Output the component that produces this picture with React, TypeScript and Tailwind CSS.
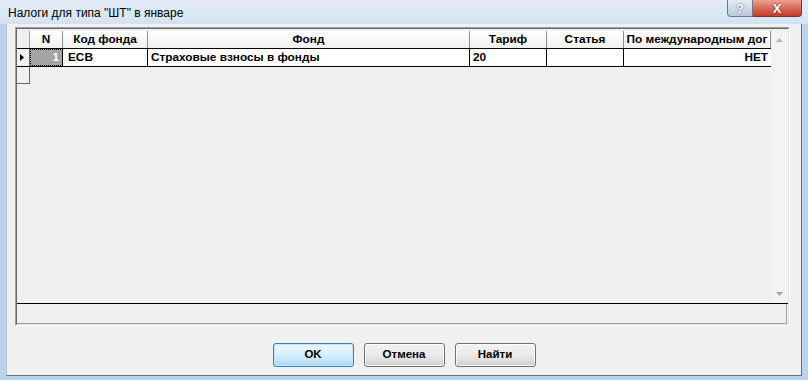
import React from "react";

const font = "font-['Liberation_Sans',Arial,sans-serif]";

const cols = [
  { key: "n", title: "N", w: "w-[33px]" },
  { key: "code", title: "Код фонда", w: "w-[85px]" },
  { key: "fund", title: "Фонд", w: "w-[322px]" },
  { key: "rate", title: "Тариф", w: "w-[77px]" },
  { key: "art", title: "Статья", w: "w-[77px]" },
  { key: "intl", title: "По международным дог", w: "w-[147px]" },
];

function Arrow({ dir }: { dir: "up" | "down" }) {
  return (
    <svg width="7" height="4" viewBox="0 0 7 4">
      {dir === "up" ? <path d="M0 4 L3.5 0 L7 4 Z" fill="#b4b4b4" /> : <path d="M0 0 L3.5 4 L7 0 Z" fill="#a8a8a8" />}
    </svg>
  );
}

function DlgButton({ label, primary }: { label: string; primary?: boolean }) {
  return (
    <button
      type="button"
      className={
        "w-[81px] h-[24px] rounded-[3px] border text-[11.5px] font-bold text-black " +
        (primary
          ? "border-[#3c7fb1] bg-gradient-to-b from-[#eaf6fd] via-[#d9f0fc] to-[#a7d9f5] shadow-[inset_0_0_0_1px_#c6e6f8]"
          : "border-[#707070] bg-gradient-to-b from-[#f2f2f2] via-[#ebebeb] to-[#cfcfcf] shadow-[inset_0_0_0_1px_#fcfcfc]")
      }
    >
      {label}
    </button>
  );
}

export default function App() {
  return (
    <div className={`w-[808px] h-[380px] bg-[#bcd3ec] flex flex-col overflow-hidden ${font}`}>
      {/* title bar */}
      <div className="h-[24px] flex items-start bg-gradient-to-b from-[#e4edf7] to-[#d3e2f2]">
        <span className="pl-[8px] pt-[5px] text-[12px] leading-[16px] text-black">
          Налоги для типа "ШТ" в январе
        </span>
        <div className="ml-auto mr-[6px] flex">
          <div className="w-[26px] h-[17px] rounded-bl-[4px] border border-t-0 border-[#6b7a8d] bg-gradient-to-b from-[#e6edf5] to-[#b9c8d9] flex items-center justify-center text-[13px] font-bold leading-none text-white [text-shadow:0_0_2px_#3b4a5c]">
            ?
          </div>
          <div className="w-[49px] h-[17px] rounded-br-[4px] border border-t-0 border-l-0 border-[#6e3a35] bg-gradient-to-b from-[#eba293] via-[#d86a57] to-[#c23a26] flex items-center justify-center text-[13px] font-bold leading-none text-white [text-shadow:0_0_2px_#4a1a14]">
            X
          </div>
        </div>
      </div>

      {/* client area */}
      <div className="flex-1 ml-[6px] mr-[6px] mb-[4px] bg-[#f0f0f0] border-l border-r border-b border-l-[#b8c6d6] border-r-[#63707f] border-b-[#63707f] flex flex-col pt-[3px]">
        <div className="ml-[8px] w-[775px] h-[299px] border-t border-l border-[#a0a0a0] border-b border-r border-b-white border-r-white">
          <div className="h-full border-t border-l border-[#696969] border-b border-r border-b-[#e3e3e3] border-r-[#e3e3e3] flex flex-col pt-[2px]">
            <div className="h-[272px] flex">
              <div className="flex-1 flex flex-col text-[11.8px] font-bold text-black">
                {/* header */}
                <div className="h-[18px] flex border-b border-black">
                  <div className="w-[13px] border-r border-[#a0a0a0] bg-[#f0f0f0]" />
                  {cols.map((c) => (
                    <div
                      key={c.key}
                      className={`${c.w} shrink-0 border-r border-[#8c8c8c] bg-gradient-to-b from-white to-[#f0f0f0] flex items-center justify-center overflow-hidden whitespace-nowrap leading-none`}
                    >
                      {c.title}
                    </div>
                  ))}
                </div>
                {/* data row */}
                <div className="h-[18px] flex border-b border-black">
                  <div className="w-[13px] border-r border-[#696969] bg-[#f0f0f0] flex items-center pl-[3px]">
                    <svg width="4" height="7" viewBox="0 0 4 7">
                      <path d="M0 0 L4 3.5 L0 7 Z" fill="#000" />
                    </svg>
                  </div>
                  <div className="w-[33px] shrink-0 border-r border-black bg-[#a4a4a4] outline-1 outline-dotted outline-black -outline-offset-1 flex items-center justify-end pr-[3px] text-white">
                    1
                  </div>
                  <div className="w-[85px] shrink-0 border-r border-black bg-white flex items-center pl-[5px]">ЕСВ</div>
                  <div className="w-[322px] shrink-0 border-r border-black bg-white flex items-center pl-[3px]">
                    Страховые взносы в фонды
                  </div>
                  <div className="w-[77px] shrink-0 border-r border-black bg-white flex items-center pl-[3px]">20</div>
                  <div className="w-[77px] shrink-0 border-r border-black bg-white" />
                  <div className="w-[147px] shrink-0 bg-white flex items-center justify-end pr-[3px]">НЕТ</div>
                </div>
                {/* new row indicator */}
                <div className="w-[13px] h-[17px] border-r border-b border-[#696969] bg-[#f0f0f0]" />
              </div>
              {/* scrollbar */}
              <div className="w-[17px] bg-[#f3f3f3] flex flex-col items-center justify-between py-[7px]">
                <Arrow dir="up" />
                <Arrow dir="down" />
              </div>
            </div>
            <div className="h-[1px] bg-black" />
            <div className="h-[20px] mr-[1px] border-r border-b border-[#a0a0a0]" />
          </div>
        </div>

        {/* buttons */}
        <div className="mt-[17px] flex justify-center gap-[10px]">
          <DlgButton label="OK" primary />
          <DlgButton label="Отмена" />
          <DlgButton label="Найти" />
        </div>
      </div>
    </div>
  );
}
